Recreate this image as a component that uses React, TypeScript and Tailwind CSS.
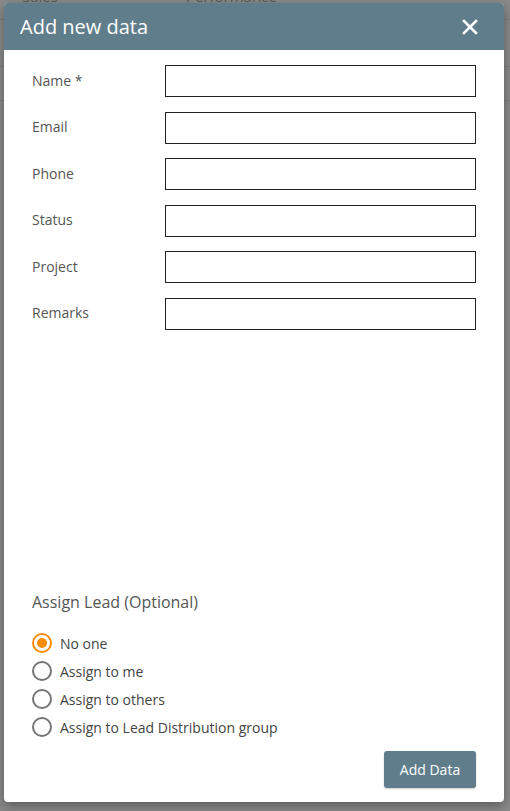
import React, { useState } from 'react';

const fields = ['Name *', 'Email', 'Phone', 'Status', 'Project', 'Remarks'];

const assignOptions = [
  'No one',
  'Assign to me',
  'Assign to others',
  'Assign to Lead Distribution group',
];

const App: React.FC = () => {
  const [assign, setAssign] = useState('No one');

  return (
    <div
      className="relative h-[811px] w-full overflow-hidden bg-[#8a8a8a]"
      style={{ fontFamily: '"Open Sans", "Noto Sans", sans-serif' }}
    >
      {/* Page behind the overlay */}
      <div className="flex h-[20px] items-start border-b border-[#7d7d7d] text-[15px] leading-none text-[#5a5a5a]">
        <span className="ml-[22px] -mt-[11px]">Sales</span>
        <span className="ml-[128px] -mt-[11px]">Performance</span>
      </div>
      <div className="mt-[46px] border-b border-[#7d7d7d]" />
      <div className="mt-[33px] border-b border-[#7d7d7d]" />

      {/* Modal */}
      <div className="absolute left-[4px] top-[3px] flex h-[799px] w-[500px] flex-col overflow-hidden rounded-[4px] bg-white shadow-[0_4px_12px_rgba(0,0,0,0.35)]">
        {/* Header */}
        <div className="flex h-[47px] shrink-0 items-center justify-between bg-[#607d8b] pl-[16px] pr-[26px]">
          <h2 className="text-[20px] font-normal text-white">Add new data</h2>
          <button className="text-white">
            <svg width="16" height="16" viewBox="0 0 16 16" fill="none" stroke="currentColor" strokeWidth={2.6} strokeLinecap="square">
              <path d="M2 2L14 14M14 2L2 14" />
            </svg>
          </button>
        </div>

        {/* Fields */}
        <div className="flex flex-col gap-[14.5px] pl-[28px] pr-[28px] pt-[15px]">
          {fields.map((label) => (
            <div key={label} className="flex items-center">
              <label className="-mt-[2px] w-[133px] text-[14px] text-[#555]">{label}</label>
              <input className="h-[32px] flex-1 border border-[#222] bg-white px-2 text-[14px] outline-none" />
            </div>
          ))}
        </div>

        <div className="flex-1" />

        {/* Assign lead */}
        <div className="pl-[28px] pr-[28px]">
          <h3 className="text-[16px] font-normal text-[#555]">Assign Lead (Optional)</h3>
          <div className="mt-[19px] flex flex-col gap-[8px]">
            {assignOptions.map((opt) => {
              const active = assign === opt;
              return (
                <label key={opt} className="flex h-[20px] cursor-pointer items-center gap-[8px]" onClick={() => setAssign(opt)}>
                  <span
                    className={`flex h-[20px] w-[20px] items-center justify-center rounded-full border-2 ${
                      active ? 'border-[#fb8c00]' : 'border-[#757575]'
                    }`}
                  >
                    {active && <span className="h-[10px] w-[10px] rounded-full bg-[#fb8c00]" />}
                  </span>
                  <span className="text-[14px] text-[#444]">{opt}</span>
                </label>
              );
            })}
          </div>
        </div>

        <div className="flex justify-end pb-[14px] pr-[28px] pt-[14px]">
          <button className="h-[37px] w-[92px] rounded-[3px] bg-[#607d8b] text-[14px] text-white shadow-[0_1px_2px_rgba(0,0,0,0.2)]">
            Add Data
          </button>
        </div>
      </div>
    </div>
  );
};

export default App;
